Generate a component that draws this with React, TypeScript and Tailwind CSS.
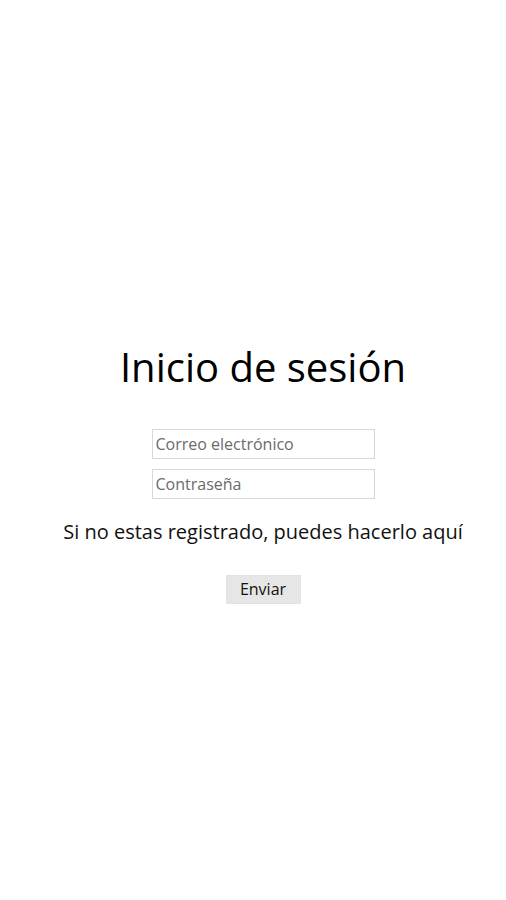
export default function App() {
  return (
    <main className="flex h-screen w-full flex-col items-center justify-center bg-white pl-[20px] pt-[50px] font-['Open_Sans',sans-serif] text-black">
      <h1 className="mb-[42px] text-[40px] leading-none">Inicio de sesión</h1>
      <form className="flex flex-col items-center">
        <input
          type="email"
          placeholder="Correo electrónico"
          className="h-[30px] w-[223px] border border-[#d8d8d8] px-[3px] text-[16px] placeholder:text-[#6b6b6b] outline-none"
        />
        <input
          type="password"
          placeholder="Contraseña"
          className="mt-[10px] h-[30px] w-[223px] border border-[#d8d8d8] px-[3px] text-[16px] placeholder:text-[#6b6b6b] outline-none"
        />
        <p className="mt-[18px] text-[20px] text-[#111]">Si no estas registrado, puedes hacerlo aquí</p>
        <button
          type="button"
          className="mt-[28px] h-[29px] w-[75px] border border-[#e2e2e2] bg-[#e6e6e6] text-[16px] text-[#111]"
        >
          Enviar
        </button>
      </form>
    </main>
  );
}
